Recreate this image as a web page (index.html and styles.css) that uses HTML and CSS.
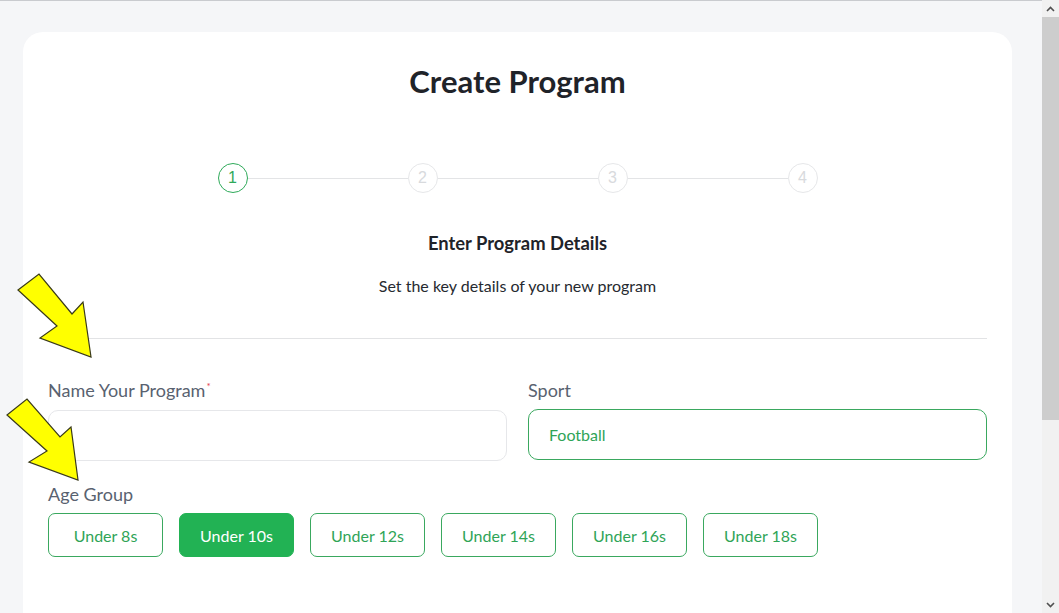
FILE: index.html
```html
<!DOCTYPE html>
<html lang="en">
<head>
<meta charset="utf-8">
<title>Create Program</title>
<link rel="stylesheet" href="styles.css">
</head>
<body>
<div class="app">
  <main class="main">
    <section class="card">
      <h1 class="title">Create Program</h1>

      <div class="stepper">
        <span class="step active">1</span>
        <span class="step-line"></span>
        <span class="step">2</span>
        <span class="step-line"></span>
        <span class="step">3</span>
        <span class="step-line"></span>
        <span class="step">4</span>
      </div>

      <h2 class="section-title">Enter Program Details</h2>
      <p class="section-sub">Set the key details of your new program</p>

      <hr class="divider">

      <div class="field-row">
        <div class="field">
          <label class="label">Name Your Program<span class="req">*</span></label>
          <div class="input"></div>
        </div>
        <div class="field">
          <label class="label">Sport</label>
          <div class="input select">Football</div>
        </div>
      </div>

      <div class="field age">
        <label class="label">Age Group</label>
        <div class="chips">
          <button class="chip">Under 8s</button>
          <button class="chip on">Under 10s</button>
          <button class="chip">Under 12s</button>
          <button class="chip">Under 14s</button>
          <button class="chip">Under 16s</button>
          <button class="chip">Under 18s</button>
        </div>
      </div>
    </section>

    <svg class="arrow arrow-1" width="100" height="100" viewBox="0 0 100 100">
      <polygon points="18,290 39,274 72,314 83,302 91,357 40,338 57,326" transform="translate(0,-265)" />
    </svg>
    <svg class="arrow arrow-2" width="100" height="100" viewBox="0 0 100 100">
      <polygon points="7,415 27,399 60,437 71,427 78,480 29,462 47,451" transform="translate(0,-390)" />
    </svg>
  </main>
  <aside class="scrollbar">
    <span class="sb-btn">
      <svg width="9" height="6" viewBox="0 0 9 6"><path d="M1 5 L4.5 1.5 L8 5" /></svg>
    </span>
    <span class="sb-thumb"></span>
    <span class="sb-track"></span>
    <span class="sb-btn">
      <svg width="9" height="6" viewBox="0 0 9 6"><path d="M1 1 L4.5 4.5 L8 1" /></svg>
    </span>
  </aside>
</div>
</body>
</html>
```

FILE: styles.css
```css
* { box-sizing: border-box; }

html, body {
  margin: 0;
  padding: 0;
  height: 100%;
  overflow: hidden;
}

body {
  font-family: Lato, "Open Sans", Arial, sans-serif;
  color: #1f2329;
  background: #f5f6f8;
}

.app {
  display: flex;
  height: 613px;
}

.main {
  position: relative;
  flex: 1;
  border-top: 1px solid #c9cbcf;
  padding: 31px 30px 0 23px;
  overflow: hidden;
}

.card {
  background: #ffffff;
  border-radius: 20px;
  padding: 30px 25px 80px;
  min-height: 640px;
}

.title {
  margin: 0;
  text-align: center;
  font-size: 31px;
  line-height: 38px;
  font-weight: 700;
  color: #1f2329;
}

.stepper {
  width: 600px;
  margin: 63px auto 0;
  display: flex;
  align-items: center;
}

.step {
  width: 30px;
  height: 30px;
  flex: none;
  border-radius: 50%;
  border: 1px solid #e6e7e9;
  color: #d8dadd;
  font-size: 16px;
  display: flex;
  align-items: center;
  justify-content: center;
  font-family: "Liberation Sans", Arial, sans-serif;
}

.step.active {
  border-color: #2faa5a;
  color: #2faa5a;
}

.step-line {
  flex: 1;
  height: 1px;
  background: #e3e4e6;
}

.section-title {
  margin: 38px 0 0;
  text-align: center;
  font-size: 18.4px;
  line-height: 24px;
  font-weight: 700;
  color: #1f2329;
}

.section-sub {
  margin: 20px 0 0;
  text-align: center;
  font-size: 16px;
  line-height: 22px;
  color: #262a30;
}

.divider {
  margin: 41px 0 0;
  border: 0;
  height: 1px;
  background: #e2e3e5;
}

.field-row {
  margin-top: 40px;
  display: grid;
  grid-template-columns: 1fr 1fr;
  column-gap: 21px;
}

.label {
  display: block;
  font-size: 18px;
  line-height: 22px;
  color: #596270;
}

.req {
  color: #e53b4d;
  font-size: 10px;
  vertical-align: top;
  line-height: 14px;
  margin-left: 1px;
}

.input {
  margin-top: 9px;
  height: 51px;
  border: 1px solid #e6e7ea;
  border-radius: 10px;
  background: #fff;
}

.input.select {
  margin-top: 8px;
  border-color: #3aa85f;
  color: #2fa457;
  font-size: 16px;
  display: flex;
  align-items: center;
  padding-left: 20px;
}

.age {
  margin-top: 22px;
}

.chips {
  margin-top: 8px;
  display: flex;
  gap: 16px;
}

.chip {
  width: 115px;
  height: 44px;
  border: 1px solid #3aa85f;
  border-radius: 7px;
  background: #fff;
  color: #2fa457;
  font-family: Lato, "Open Sans", Arial, sans-serif;
  font-size: 16px;
  padding: 0;
}

.chip.on {
  background: #22b254;
  border-color: #22b254;
  color: #ffffff;
}

.arrow {
  position: absolute;
  left: 0;
  overflow: visible;
}

.arrow polygon {
  fill: #ffff00;
  stroke: #3a3a1a;
  stroke-width: 1.2;
  stroke-linejoin: miter;
}

.arrow-1 { top: 264px; }
.arrow-2 { top: 389px; }

.scrollbar {
  width: 17px;
  flex: none;
  display: flex;
  flex-direction: column;
  background: #f1f1f1;
}

.sb-btn {
  height: 17px;
  flex: none;
  display: flex;
  align-items: center;
  justify-content: center;
}

.sb-btn svg path {
  fill: none;
  stroke: #505050;
  stroke-width: 1.6;
}

.sb-thumb {
  height: 403px;
  flex: none;
  background: #cdcdcd;
}

.sb-track {
  flex: 1;
}
```
